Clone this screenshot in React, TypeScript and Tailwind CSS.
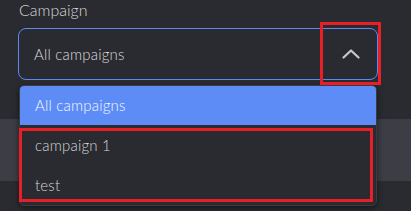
const options = ['All campaigns', 'campaign 1', 'test'];

function Chevron() {
  return (
    <svg width="18" height="10" viewBox="0 0 18 10" fill="none" className="text-[#c9c9cc]">
      <polyline points="1.5,8.5 9,1.5 16.5,8.5" stroke="currentColor" strokeWidth="2.2" strokeLinecap="round" strokeLinejoin="round" />
    </svg>
  );
}

export default function App() {
  return (
    <div
      className="relative w-[411px] h-[211px] overflow-hidden bg-[#2a2b30] font-light"
      style={{ fontFamily: 'Lato, "Noto Sans", sans-serif' }}
    >
      <div className="pl-[19px] text-[16px] leading-[20px] text-[#d8d8da]">Campaign</div>

      <div className="ml-[18px] mt-[8px] w-[360px] h-[52px] border border-[#5b8af5] rounded-[8px] flex items-center justify-between pl-[15px] pr-[17px]">
        <span className="text-[15px] tracking-[0.2px] text-[#dadadc]">All campaigns</span>
        <Chevron />
      </div>

      {/* content behind the open menu */}
      <div className="mt-[39px] h-[62px] bg-[#3c3d45]" />

      <div className="absolute left-[19px] top-[85px] w-[358px] rounded-[5px] border border-[#3a3c44] bg-[#2a2b30] shadow-[0_2px_6px_rgba(0,0,0,0.5)] overflow-hidden">
        {options.map((o, i) => (
          <div
            key={o}
            className={
              i === 0
                ? 'h-[39px] flex items-center pl-[15px] bg-[#5d8cf6] text-[15px] tracking-[0.2px] text-[#f5f7ff]'
                : 'h-[40px] flex items-center pl-[15px] text-[15px] tracking-[0.2px] text-[#d4d4d6]'
            }
          >
            {o}
          </div>
        ))}
      </div>

      {/* annotation boxes */}
      <div className="absolute left-[320px] top-[22px] w-[61px] h-[63px] border-[3px] border-[#e81f28]" />
      <div className="absolute left-[19px] top-[128px] w-[354px] h-[74px] border-[3px] border-[#e81f28]" />
    </div>
  );
}
